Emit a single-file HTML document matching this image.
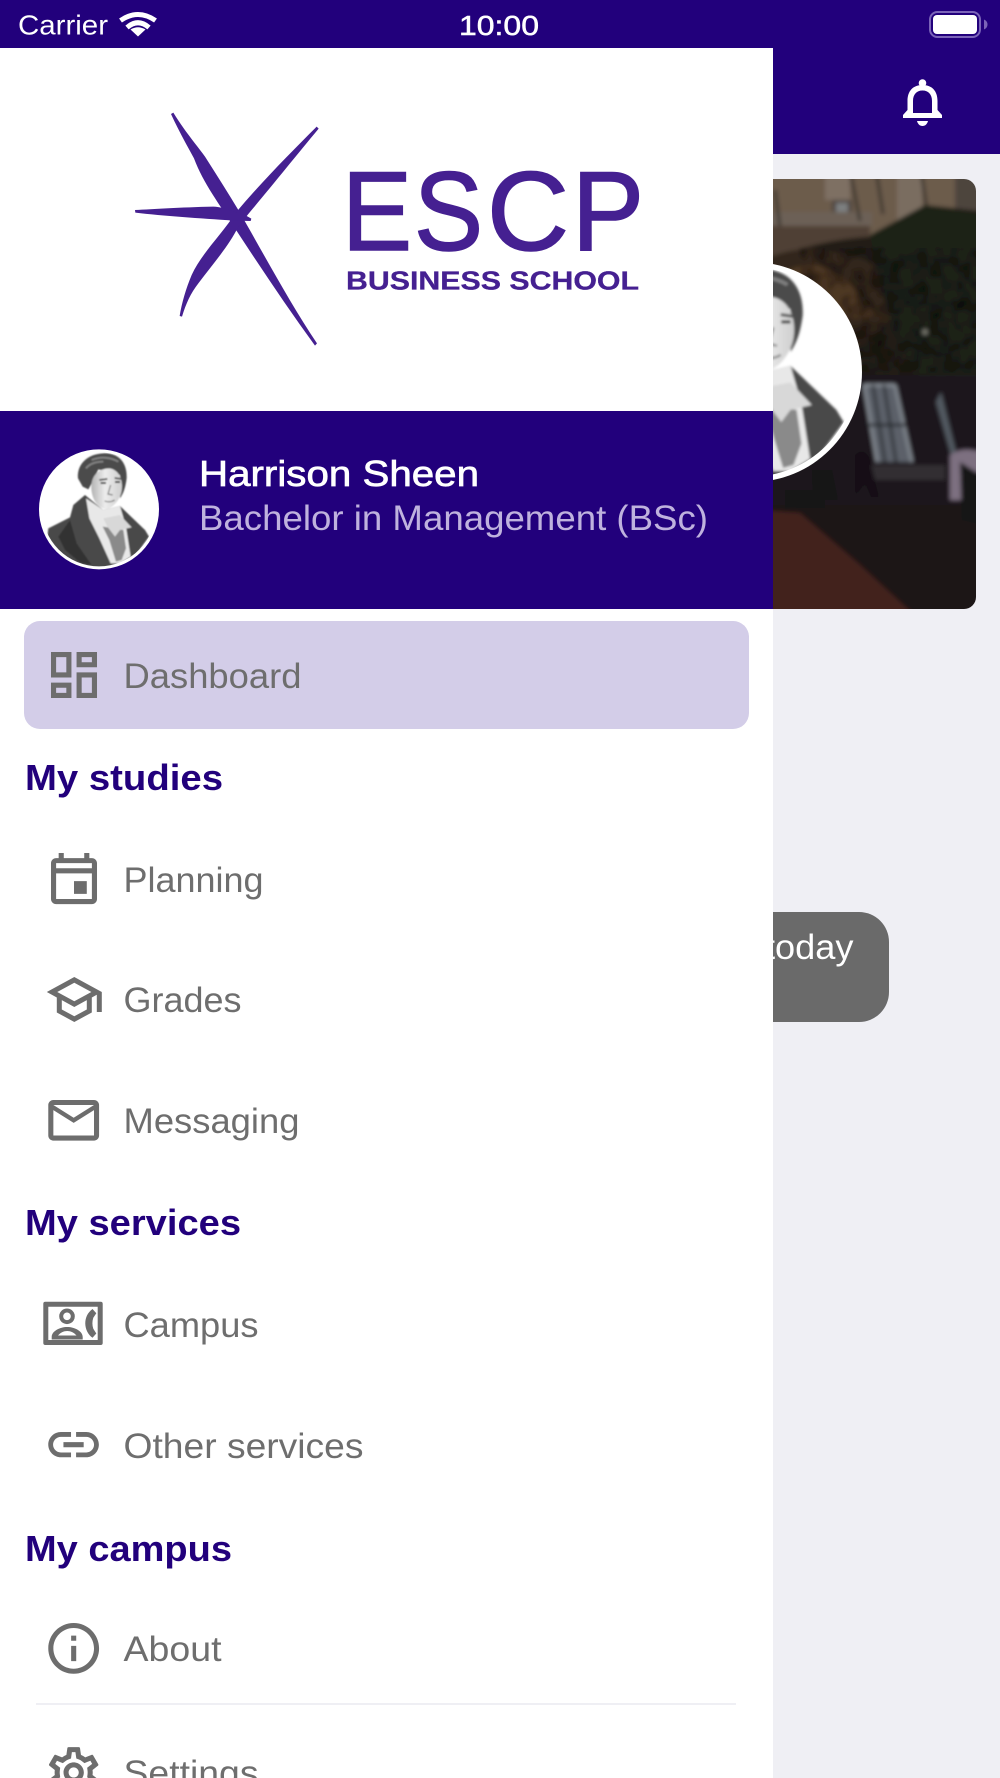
<!DOCTYPE html>
<html lang="en"><head><meta charset="utf-8"><title>ESCP</title>
<style>
html,body{margin:0;padding:0;width:1000px;height:1778px;overflow:hidden;background:#efeff4}
svg{display:block}
text{font-family:"Liberation Sans",sans-serif}
.n{font-size:35px;fill:#6e6e6e}
.h{font-size:36px;font-weight:700;fill:#22007c}
</style></head><body>
<svg xmlns="http://www.w3.org/2000/svg" width="1000" height="1778" viewBox="0 0 1000 1778">
<defs>
<clipPath id="card"><rect x="600" y="179" width="376" height="430" rx="12"/></clipPath>
<clipPath id="pc"><circle cx="237" cy="238" r="171"/></clipPath>
<filter id="b" x="-10%" y="-10%" width="120%" height="120%"><feGaussianBlur stdDeviation="2.200"/></filter>
<filter id="b2" x="-10%" y="-10%" width="120%" height="120%"><feGaussianBlur stdDeviation="2.200"/></filter>
<filter id="mott" x="0" y="0" width="100%" height="100%"><feTurbulence type="fractalNoise" baseFrequency=".07" numOctaves="2" seed="4"/><feColorMatrix values="0 0 0 0 0  0 0 0 0 0  0 0 0 0 0  2.200 0 0 0 -.8"/></filter>
<linearGradient id="face" x1="0" y1="0" x2="1" y2="0"><stop offset="0" stop-color="#b4b4b4"/><stop offset=".45" stop-color="#ececec"/><stop offset="1" stop-color="#cfcfcf"/></linearGradient>
<g id="portrait">
<circle cx="237" cy="238" r="180" fill="#fff"/>
<g clip-path="url(#pc)"><g filter="url(#b2)">
<path d="M195 195L160 225 150 262 85 295 82 320 120 370 180 410 300 420 340 385 387 320 375 300 300 228 250 240Z" fill="#4a4a4a"/>
<path d="M150 270L170 340 215 405 180 398 135 360 115 320Z" fill="#333"/>
<path d="M198 205L250 240 300 228 318 290 332 380 300 400 272 400 238 325 208 265Z" fill="#e8e8e8"/>
<path d="M248 290L268 330 288 395 305 390 318 355 310 300Z" fill="#8a8a8a"/>
<path d="M250 265L300 255 335 292 300 300 285 320 262 290Z" fill="#d8d8d8"/>
<path d="M174 145C170 105 200 72 250 70 298 68 322 100 320 145 316 175 310 190 300 205L300 135 235 118 215 160 205 178 188 170Z" fill="#4c4c4c"/>
<path d="M215 90C240 80 270 80 295 95M198 115C210 100 230 95 250 95" stroke="#808080" stroke-width="6" fill="none"/>
<path d="M214 175C212 135 238 115 268 115 296 118 310 148 305 182 300 212 275 238 255 237 228 228 216 205 214 175Z" fill="url(#face)"/>
<path d="M238 150L262 147M284 144L304 147" stroke="#555" stroke-width="5" fill="none"/>
<path d="M242 159h16M285 156h15" stroke="#3a3a3a" stroke-width="5" fill="none"/>
<path d="M272 165L264 192 278 195M254 213q16 6 30-3" stroke="#808080" stroke-width="3.500" fill="none"/>
</g></g>
</g>
</defs>

<rect width="1000" height="154" fill="#22007c"/>

<!-- status bar -->
<text x="18" y="34.500" font-size="28" fill="#fff" textLength="90" lengthAdjust="spacingAndGlyphs">Carrier</text>
<g fill="none" stroke="#fff" stroke-width="5">
<path d="M120.500 20.500Q138 8.500 155.500 20.500"/>
<path d="M127 27.500Q138 18 149 27.500"/>
</g>
<path d="M138 36.500L130.500 29.500Q138 25 145.500 29.500Z" fill="#fff"/>
<text x="459" y="35" font-size="28" fill="#fff" stroke="#fff" stroke-width=".5" textLength="80" lengthAdjust="spacingAndGlyphs">10:00</text>
<rect x="930" y="12" width="50" height="25" rx="7.500" fill="none" stroke="#7b64b8" stroke-width="2"/>
<rect x="933" y="15" width="44" height="19" rx="4" fill="#fff"/>
<path d="M984 19.500q3.500 1.500 3.500 5t-3.500 5Z" fill="#7b64b8"/>

<!-- bell -->
<g fill="#fff">
<circle cx="922.500" cy="83" r="3.800"/>
<path fill-rule="evenodd" d="M922.500 85C913 85 907.500 91 907.500 101V110L903 115V118H942V115L937.500 110V101C937.500 91 932 85 922.500 85ZM922.500 90.500C928.500 90.500 932 94.500 932 101V113H913V101C913 94.500 916.500 90.500 922.500 90.500Z"/>
<path d="M917 121h11c-.8 3-2.700 5-5.500 5s-4.700-2-5.500-5z"/>
</g>

<!-- background card photo -->
<g clip-path="url(#card)"><g filter="url(#b)">
<rect x="600" y="150" width="420" height="490" fill="#17151a"/>
<rect x="600" y="150" width="420" height="90" fill="#6c5b4b"/>
<rect x="825" y="150" width="25" height="50" fill="#7e7064"/>
<rect x="897" y="150" width="25" height="72" fill="#7a6d61"/>
<rect x="832" y="200" width="20" height="20" fill="#4d4541"/>
<path d="M836 203h12v14h-12z" fill="#7d7f80"/>
<path d="M760 212H872V226H760Z" fill="#6c6157"/>
<path d="M846 150l14 71M873 150l10 64M918 150l10 67M775 190l6 45" stroke="#3a342e" stroke-width="3" fill="none"/>
<rect x="760" y="226" width="110" height="30" fill="#4f4135"/>
<rect x="955" y="150" width="60" height="70" fill="#4e453e"/>
<path d="M760 265C800 245 840 238 880 236L925 205 1020 215V410L920 410 860 400 760 370Z" fill="#221e16"/>
<path d="M760 262C800 240 850 245 905 282 900 320 870 345 830 360L760 350Z" fill="#33261b"/>
<path d="M780 275q30-20 60 0q20 15 35 40q-30 10-60-5q-25-10-35-35Z" fill="#4d3723"/>
<path d="M870 235L925 205 1020 220V375H920C890 340 880 280 870 235Z" fill="#1f2219"/>
<rect x="800" y="248" width="180" height="125" filter="url(#mott)" opacity=".55"/>
<circle cx="925" cy="332" r="3" fill="#77776d"/>
<path d="M760 375H1020V505H760Z" fill="#1a181b"/>
<path d="M864 385H895L912 462H877Z" fill="#5c6169"/>
<path d="M864 385l13 77M895 385l17 77M864 385H895" stroke="#8e949c" stroke-width="2.500" fill="none"/>
<path d="M873 385l12 77M884 385l12 77M866 425H905" stroke="#23262b" stroke-width="2.500" fill="none"/>
<path d="M941 392l20 80h-5l-20-70Z" fill="#535a62"/>
<path d="M860 465H945V480H860Z" fill="#302d31"/>
<path d="M760 505H1020V650H760Z" fill="#1c1718"/>
<path d="M760 510L800 513 860 565 925 625H760Z" fill="#43231f"/>
<path d="M950 455q12-8 26-4L1020 450V500H950Z" fill="#7d7080"/>
<path d="M960 462l16 10 30 0V530L962 520Z" fill="#141318"/>
<path d="M855 455q8-8 14 2l10 40h-8l-6-14-10 14Z" fill="#121116"/>
<path d="M812 470h20l6 30h-25ZM785 490h40v18h-40Z" fill="#131215"/>
</g>
</g>
<use href="#portrait" transform="translate(607.200 226.600) scale(.611)"/>

<!-- grey toast -->
<rect x="700" y="912" width="189" height="110" rx="30" fill="#6a6a6a"/>
<text x="765" y="959" font-size="35" fill="#fff" textLength="88.500" lengthAdjust="spacingAndGlyphs">today</text>

<!-- drawer -->
<rect x="0" y="48" width="773" height="1730" fill="#fff"/>
<rect x="0" y="411" width="773" height="198" fill="#22007c"/>

<!-- logo -->
<g fill="#452091">
<g transform="translate(120 90) scale(.33333)">
<path d="M153 72L160 68C195 125 230 165 255 200 290 255 325 310 358 365 430 490 510 640 591 760L585 767C500 650 420 530 345 415 300 345 250 280 222 205 200 165 175 120 153 72Z"/>
<path d="M590 110C520 180 430 270 350 365 300 440 245 490 215 555 198 595 185 640 179 678L186 680C198 640 212 610 235 580 280 520 325 470 355 410L385 372C450 295 530 195 596 116Z"/>
<path d="M45 360C100 358 180 352 280 350 300 350 320 358 350 368L380 378 394 386 392 393 340 392C240 385 130 378 46 368Z"/>
</g>
<g font-size="112" stroke="#452091" stroke-width="1.600">
<text x="342" y="250" textLength="70" lengthAdjust="spacingAndGlyphs">E</text>
<text x="414" y="250" textLength="69" lengthAdjust="spacingAndGlyphs">S</text>
<text x="487" y="250" textLength="82" lengthAdjust="spacingAndGlyphs">C</text>
<text x="572" y="250" textLength="72" lengthAdjust="spacingAndGlyphs">P</text>
</g>
<text x="346" y="289.500" font-size="26" font-weight="700" stroke="#452091" stroke-width=".3" textLength="293" lengthAdjust="spacingAndGlyphs">BUSINESS SCHOOL</text>
</g>

<!-- profile -->
<use href="#portrait" transform="translate(20 430) scale(.33333)"/>
<text x="199" y="486" font-size="36.500" fill="#fff" stroke="#fff" stroke-width=".7" textLength="280" lengthAdjust="spacingAndGlyphs">Harrison Sheen</text>
<text x="199" y="530" font-size="35" fill="#bfb2de" textLength="509" lengthAdjust="spacingAndGlyphs">Bachelor in Management (BSc)</text>

<!-- selected -->
<rect x="24" y="621" width="725" height="108" rx="16" fill="#d3cde8"/>
<g fill="#6d6d6d">
<path transform="translate(43.330 644.300) scale(2.556)" d="M19 5v2h-4V5h4M9 5v6H5V5h4m10 8v6h-4v-6h4M9 17v2H5v-2h4M21 3h-8v6h8V3zM11 3H3v10h8V3zm10 8h-8v10h8V11zm-10 4H3v6h8v-6z"/>
<path transform="translate(43.330 850.400) scale(2.556)" d="M19 3h-1V1h-2v2H8V1H6v2H5c-1.100 0-2 .9-2 2v14c0 1.100.9 2 2 2h14c1.100 0 2-.9 2-2V5c0-1.100-.9-2-2-2zm0 2v2H5V5h14zM5 19V9h14v10H5zm12-7h-5v5h5v-5z"/>
<path transform="translate(44.300 969.500) scale(2.500)" d="M12 3L1 9l4 2.180v6L12 21l7-3.820v-6l2-1.090V17h2V9L12 3zm6.820 6L12 12.720 5.180 9 12 5.280 18.820 9zM17 15.990l-5 2.730-5-2.730v-3.720L12 15l5-2.730v3.720z"/>
<path transform="translate(43.200 1089.800) scale(2.540)" d="M22 6c0-1.100-.9-2-2-2H4c-1.100 0-2 .9-2 2v12c0 1.100.9 2 2 2h16c1.100 0 2-.9 2-2V6zm-2 0l-8 5-8-5h16zm0 12H4V8l8 5 8-5v10z"/>
<path transform="translate(43.200 1414.300) scale(2.530)" d="M3.900 12c0-1.710 1.390-3.100 3.100-3.100h4V7H7c-2.760 0-5 2.240-5 5s2.240 5 5 5h4v-1.900H7c-1.710 0-3.100-1.390-3.100-3.100zM8 13h8v-2H8v2zm9-6h-4v1.900h4c1.710 0 3.100 1.390 3.100 3.100s-1.390 3.100-3.100 3.100h-4V17h4c2.760 0 5-2.240 5-5s-2.240-5-5-5z"/>
<path transform="translate(43.200 1617.900) scale(2.540)" d="M11 7h2v2h-2zm0 4h2v6h-2zm1-9C6.480 2 2 6.480 2 12s4.480 10 10 10 10-4.480 10-10S17.520 2 12 2zm0 18c-4.410 0-8-3.590-8-8s3.590-8 8-8 8 3.590 8 8-3.590 8-8 8z"/>
<path transform="translate(43.200 1742) scale(2.540)" d="M19.430 12.980c.04-.32.07-.64.07-.98 0-.34-.03-.66-.07-.98l2.110-1.650c.19-.15.24-.42.12-.64l-2-3.460c-.09-.16-.26-.25-.44-.25-.06 0-.12.01-.17.03l-2.490 1c-.52-.4-1.080-.73-1.690-.98l-.38-2.650C14.460 2.180 14.250 2 14 2h-4c-.25 0-.46.18-.49.42l-.38 2.650c-.61.25-1.170.59-1.690.98l-2.490-1c-.06-.02-.12-.03-.18-.03-.17 0-.34.09-.43.25l-2 3.460c-.13.22-.07.49.12.64l2.110 1.650c-.04.32-.07.65-.07.98 0 .33.03.66.07.98l-2.110 1.650c-.19.15-.24.42-.12.64l2 3.460c.09.16.26.25.44.25.06 0 .12-.01.17-.03l2.490-1c.52.4 1.080.73 1.690.98l.38 2.650c.03.24.24.42.49.42h4c.25 0 .46-.18.49-.42l.38-2.650c.61-.25 1.170-.59 1.690-.98l2.490 1c.06.02.12.03.18.03.17 0 .34-.09.43-.25l2-3.460c.12-.22.07-.49-.12-.64l-2.110-1.650zm-1.980-1.710c.04.31.05.52.05.73 0 .21-.02.43-.05.73l-.14 1.130.89.7 1.080.84-.7 1.210-1.270-.51-1.040-.42-.9.68c-.43.32-.84.56-1.250.73l-1.060.43-.16 1.130-.2 1.350h-1.400l-.19-1.350-.16-1.130-1.060-.43c-.43-.18-.83-.41-1.230-.71l-.91-.7-1.060.43-1.270.51-.7-1.210 1.080-.84.89-.7-.14-1.130c-.03-.31-.05-.54-.05-.74s.02-.43.05-.73l.14-1.130-.89-.7-1.080-.84.7-1.210 1.270.51 1.040.42.9-.68c.43-.32.84-.56 1.250-.73l1.060-.43.16-1.130.2-1.350h1.390l.19 1.350.16 1.130 1.060.43c.43.18.83.41 1.230.71l.91.7 1.060-.43 1.270-.51.7 1.210-1.070.85-.89.7.14 1.130zM12 8c-2.210 0-4 1.790-4 4s1.790 4 4 4 4-1.790 4-4-1.790-4-4-4zm0 6c-1.100 0-2-.9-2-2s.9-2 2-2 2 .9 2 2-.9 2-2 2z"/>
<!-- campus contact card -->
<path fill-rule="evenodd" d="M45.300 1301.700H100.700C102 1301.700 102.700 1302.400 102.700 1303.700V1343C102.700 1344.300 102 1345 100.700 1345H45.300C44 1345 43.300 1344.300 43.300 1343V1303.700C43.300 1302.400 44 1301.700 45.300 1301.700ZM48.300 1306.700V1340H97.700V1306.700Z"/>
<path fill-rule="evenodd" d="M67 1308.500a7.800 7.800 0 1 0 .01 0ZM67 1312.500a3.800 3.800 0 1 1-.01 0Z"/>
<path fill-rule="evenodd" d="M51.700 1339.500V1337C51.700 1331 60 1327 67.200 1327S82.700 1331 82.700 1337V1339.500ZM58 1335.500H76.500C74 1332.500 70.500 1331 67.200 1331S60.500 1332.500 58 1335.500Z"/>
<path d="M92.500 1309l3.800 4.300-3 4.500c-1.200 3.500-1.200 7.500 0 11l3 4.700-3.800 4.300c-9-6.500-10.200-21.500 0-28.800Z"/>
</g>
<rect x="36" y="1703" width="700" height="2" fill="#efeff4"/>

<!-- menu labels -->
<text class="n" x="123.500" y="688" textLength="178" lengthAdjust="spacingAndGlyphs">Dashboard</text>
<text class="h" x="25" y="790" textLength="198" lengthAdjust="spacingAndGlyphs">My studies</text>
<text class="n" x="123.500" y="892" textLength="140" lengthAdjust="spacingAndGlyphs">Planning</text>
<text class="n" x="123.500" y="1012" textLength="118" lengthAdjust="spacingAndGlyphs">Grades</text>
<text class="n" x="123.500" y="1133" textLength="176" lengthAdjust="spacingAndGlyphs">Messaging</text>
<text class="h" x="25" y="1235" textLength="216" lengthAdjust="spacingAndGlyphs">My services</text>
<text class="n" x="123.500" y="1337" textLength="135" lengthAdjust="spacingAndGlyphs">Campus</text>
<text class="n" x="123.500" y="1458" textLength="240" lengthAdjust="spacingAndGlyphs">Other services</text>
<text class="h" x="25" y="1561" textLength="207" lengthAdjust="spacingAndGlyphs">My campus</text>
<text class="n" x="123.500" y="1661" textLength="98" lengthAdjust="spacingAndGlyphs">About</text>
<text class="n" x="123.500" y="1785" textLength="135" lengthAdjust="spacingAndGlyphs">Settings</text>
</svg>
</body></html>
